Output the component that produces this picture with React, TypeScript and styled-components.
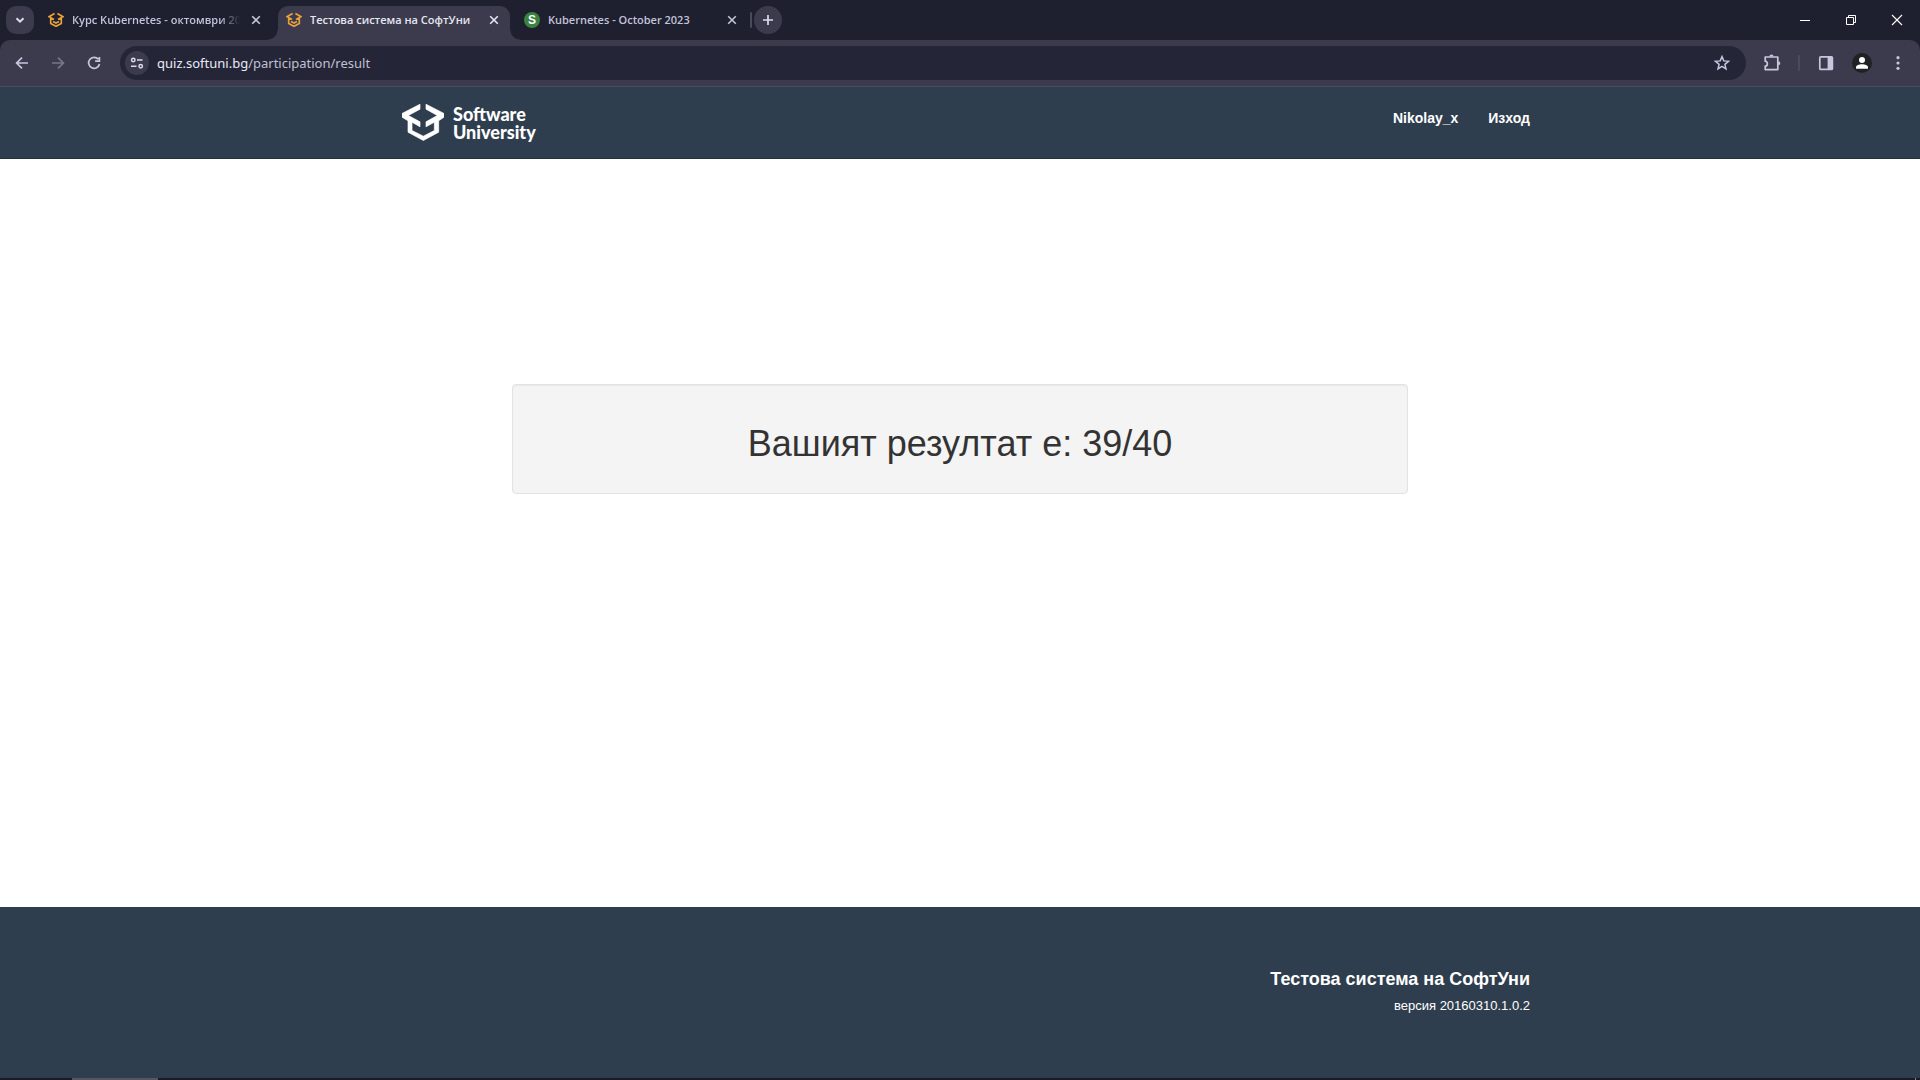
import React from "react";
import styled, { createGlobalStyle } from "styled-components";

const GlobalStyle = createGlobalStyle`
  *, *::before, *::after { box-sizing: border-box; }
  body { margin: 0; background: #fff; font-family: "Liberation Sans", Arial, sans-serif; }
  button, input { font: inherit; }
`;

const uiFont = `"Noto Sans", "Open Sans", sans-serif`;

const Screen = styled.div`
  display: flex;
  flex-direction: column;
  min-height: 100vh;
`;

const TabStrip = styled.header`
  display: flex;
  align-items: flex-start;
  height: 40px;
  padding: 6px 0 0 6px;
  background: #1e1f2f;
  font-family: "Open Sans", "Noto Sans", sans-serif;
`;

const RoundButton = styled.button<{ $radius: number }>`
  display: grid;
  place-items: center;
  flex: none;
  width: 28px;
  height: 28px;
  padding: 0;
  border: 0;
  border-radius: ${(p) => p.$radius}px;
  background: #3b3b4d;
  color: #dcdcec;
`;

const TabList = styled.nav`
  display: flex;
  gap: 6px;
  padding: 0 2px 0 6px;
`;

const Tab = styled.div<{ $active?: boolean }>`
  position: relative;
  display: flex;
  align-items: center;
  gap: 8px;
  width: 232px;
  height: 34px;
  padding: 0 8px 6px;
  border-radius: 10px 10px 0 0;
  background: ${(p) => (p.$active ? "#3b3b4d" : "transparent")};
  color: ${(p) => (p.$active ? "#e6e6f2" : "#c3c3da")};

  &::before,
  &::after {
    content: "";
    display: ${(p) => (p.$active ? "block" : "none")};
    position: absolute;
    bottom: 0;
    width: 10px;
    height: 10px;
  }
  &::before {
    left: -10px;
    background: radial-gradient(circle at 0 0, transparent 9px, #3b3b4d 10px);
  }
  &::after {
    right: -10px;
    background: radial-gradient(circle at 100% 0, transparent 9px, #3b3b4d 10px);
  }
`;

const TabTitle = styled.span<{ $faded?: boolean }>`
  flex: 1;
  min-width: 0;
  overflow: hidden;
  white-space: nowrap;
  font-size: 11px;
  font-weight: 600;
  line-height: 16px;
  mask-image: ${(p) => (p.$faded ? "linear-gradient(to right, #000 88%, transparent)" : "none")};
`;

const CloseButton = styled.button`
  display: grid;
  place-items: center;
  width: 16px;
  height: 16px;
  padding: 0;
  border: 0;
  background: transparent;
  color: inherit;
`;

const Badge = styled.span`
  display: grid;
  place-items: center;
  width: 16px;
  height: 16px;
  border-radius: 50%;
  background: #3b813f;
  color: #fff;
  font-family: "Liberation Sans", Arial, sans-serif;
  font-size: 12px;
  font-weight: 700;
  line-height: 16px;
`;

const Divider = styled.span<{ $gap?: number }>`
  flex: none;
  width: 2px;
  height: 16px;
  margin: 0 ${(p) => p.$gap ?? 0}px;
  border-radius: 1px;
  background: #4a4a5e;
`;

const NewTab = styled.div`
  display: flex;
  align-items: center;
  gap: 2px;
`;

const WindowControls = styled.div`
  display: flex;
  margin: -6px 0 0 auto;
`;

const WindowButton = styled.button`
  display: grid;
  place-items: center;
  width: 46px;
  height: 40px;
  padding: 0;
  border: 0;
  background: transparent;
  color: #fff;
`;

const ToolbarBack = styled.div`
  background: #1e1f2f;
`;

const Toolbar = styled.div`
  display: flex;
  align-items: center;
  height: 47px;
  padding: 0 4px;
  border-bottom: 1px solid #4b4b5d;
  border-radius: 10px 10px 0 0;
  background: #3b3b4d;
  font-family: ${uiFont};
`;

const ToolButton = styled.button<{ $dim?: boolean }>`
  display: grid;
  place-items: center;
  flex: none;
  width: 36px;
  height: 36px;
  padding: 0;
  border: 0;
  background: transparent;
  color: ${(p) => (p.$dim ? "#77778c" : "#c6c6de")};
`;

const AddressBar = styled.div`
  display: flex;
  flex: 1;
  align-items: center;
  height: 34px;
  margin: 0 8px;
  padding: 0 6px 0 5px;
  border-radius: 17px;
  background: #242536;
`;

const SiteInfo = styled.button`
  display: grid;
  place-items: center;
  flex: none;
  width: 24px;
  height: 24px;
  margin-right: 8px;
  padding: 0;
  border: 0;
  border-radius: 50%;
  background: #3b3b4d;
  color: #dcdcec;
`;

const Url = styled.a`
  flex: 1;
  color: #c0c0d2;
  font-size: 13px;
  line-height: 20px;
  text-decoration: none;

  strong {
    color: #eaeaf6;
    font-weight: 400;
  }
`;

const Actions = styled.div`
  display: flex;
  align-items: center;
`;

const SiteHeader = styled.header`
  flex: none;
  height: 72px;
  border-bottom: 1px solid #22303e;
  background: #2f3e4e;
`;

const Container = styled.div`
  display: flex;
  justify-content: space-between;
  width: 100%;
  max-width: 1170px;
  margin: 0 auto;
  padding: 0 15px;
`;

const Brand = styled.a`
  display: flex;
  align-items: center;
  gap: 9px;
  padding: 17px 12px 0;
  color: #fff;
  font-family: Lato, sans-serif;
  font-size: 18px;
  font-weight: 900;
  line-height: 18px;
  text-decoration: none;
`;

const Menu = styled.nav`
  display: flex;
  gap: 30px;
  padding-top: 21px;
`;

const MenuLink = styled.a`
  color: #fff;
  font-size: 14px;
  font-weight: 700;
  line-height: 20px;
  text-decoration: none;
`;

const Main = styled.main`
  flex: 1;
  padding: 225px 24px;
`;

const Well = styled.section`
  max-width: 896px;
  margin: 0 auto;
  padding: 19px;
  border: 1px solid #e3e3e3;
  border-radius: 4px;
  background: #f4f4f4;
  box-shadow: inset 0 1px 1px rgba(0, 0, 0, 0.05);
`;

const Result = styled.h1`
  margin: 20px 0 10px;
  color: #333;
  font-size: 36px;
  font-weight: 400;
  line-height: 40px;
  text-align: center;
`;

const SiteFooter = styled.footer`
  flex: none;
  height: 171px;
  padding-top: 62px;
  background: #2f3e4e;
  color: #fff;
`;

const FooterText = styled.div`
  margin-left: auto;
  text-align: right;
`;

const FooterTitle = styled.h2`
  margin: 0 0 8px;
  font-size: 18px;
  font-weight: 700;
  line-height: 20px;
`;

const Version = styled.p`
  margin: 0;
  font-size: 13px;
  line-height: 18px;
`;

const Taskbar = styled.div`
  display: flex;
  flex: none;
  height: 2px;
  padding: 0 4px 0 72px;
  background: #1d1a28;
`;

const TaskbarItem = styled.span`
  width: 86px;
  background: #55565f;
`;

const TaskbarEdge = styled.span`
  width: 1px;
  margin-left: auto;
  background: #85858c;
`;

const emblem =
  "M54 0 0 28V39L18 50V84L64 109 110 84V50L126 39V28L72 0V15L106 34 72 53V68L97 54V79L64 96 30 79V54L54 68V53L19 34 54 15Z";

const Emblem = () => (
  <svg width="42" height="37" viewBox="0 0 126 110" fill="#fff" stroke="#fff" strokeWidth="2" aria-hidden="true">
    <path d={emblem} />
  </svg>
);

const Favicon = () => (
  <svg width="16" height="16" viewBox="0 0 16 16" fill="none" stroke="#e9a13b" strokeWidth="1.7" aria-hidden="true">
    <path d="M6.6 1.6 1 4.7l5 2.9M9.4 1.6 15 4.7l-5 2.9M2.7 6.2v5.2L8 14.2l5.3-2.8V6.2M5 9.4 8 11l3-1.6" />
  </svg>
);

const Cross = () => (
  <svg width="16" height="16" viewBox="0 0 16 16" stroke="currentColor" strokeWidth="1.6" aria-hidden="true">
    <path d="m4.2 4.2 7.6 7.6M11.8 4.2l-7.6 7.6" />
  </svg>
);

const Icon = ({ children, size = 20 }: { children: React.ReactNode; size?: number }) => (
  <svg width={size} height={size} viewBox={`0 0 ${size} ${size}`} fill="none" stroke="currentColor" strokeWidth="1.7" aria-hidden="true">
    {children}
  </svg>
);

const tabs = [
  { title: "Курс Kubernetes - октомври 2023", faded: true },
  { title: "Тестова система на СофтУни", active: true },
  { title: "Kubernetes - October 2023", badge: "S" },
];

export default function App() {
  return (
    <Screen>
      <GlobalStyle />
      <TabStrip>
        <RoundButton $radius={10} aria-label="Search tabs">
          <Icon size={16}><path d="m4.5 6.2 3.5 3.5 3.5-3.5" strokeWidth="2" /></Icon>
        </RoundButton>
        <TabList>
          {tabs.map((tab) => (
            <Tab key={tab.title} $active={tab.active}>
              {tab.badge ? <Badge>{tab.badge}</Badge> : <Favicon />}
              <TabTitle $faded={tab.faded}>{tab.title}</TabTitle>
              <CloseButton aria-label="Close tab"><Cross /></CloseButton>
            </Tab>
          ))}
        </TabList>
        <NewTab>
          <Divider />
          <RoundButton $radius={14} aria-label="New tab">
            <Icon size={16}><path d="M8 3v10M3 8h10" /></Icon>
          </RoundButton>
        </NewTab>
        <WindowControls>
          <WindowButton aria-label="Minimize">
            <Icon size={12}><path d="M1 6.5h10" strokeWidth="1" /></Icon>
          </WindowButton>
          <WindowButton aria-label="Restore">
            <Icon size={12}><path d="M1.5 3.5h7v7h-7zM3.5 3.5v-2h7v7h-2" strokeWidth="1" /></Icon>
          </WindowButton>
          <WindowButton aria-label="Close">
            <Icon size={12}><path d="m1 1 10 10M11 1 1 11" strokeWidth="1.1" /></Icon>
          </WindowButton>
        </WindowControls>
      </TabStrip>

      <ToolbarBack>
        <Toolbar>
          <Actions>
            <ToolButton aria-label="Back"><Icon><path d="M16 10H4.8M10 4.6 4.6 10l5.4 5.4" /></Icon></ToolButton>
            <ToolButton $dim aria-label="Forward"><Icon><path d="M4 10h11.2M10 4.6l5.4 5.4-5.4 5.4" /></Icon></ToolButton>
            <ToolButton aria-label="Reload">
              <Icon><path d="M14.3 6.2A5.5 5.5 0 1 0 15.5 11M15.4 4v4.2h-4.3" /></Icon>
            </ToolButton>
          </Actions>
          <AddressBar>
            <SiteInfo aria-label="Site information">
              <Icon size={14}>
                <circle cx="3.3" cy="4" r="1.7" strokeWidth="1.5" />
                <path d="M7 4h5.5M1 10.2h5.5" strokeWidth="1.5" />
                <circle cx="10.7" cy="10.2" r="1.7" strokeWidth="1.5" />
              </Icon>
            </SiteInfo>
            <Url href="#"><strong>quiz.softuni.bg</strong>/participation/result</Url>
            <ToolButton aria-label="Bookmark">
              <Icon><path d="m10 3.6 1.8 4.3 4.7.4-3.6 3 1.1 4.6-4-2.5-4 2.5 1.1-4.6-3.6-3 4.7-.4Z" strokeWidth="1.5" /></Icon>
            </ToolButton>
          </AddressBar>
          <Actions>
            <ToolButton aria-label="Extensions">
              <Icon>
                <path d="M3.2 4h12.6v12.6H3.2v-3.4c2.9 0 2.9-5 0-5Z" strokeLinejoin="round" />
                <path d="M7.4 3.6a2.1 2.1 0 0 1 4.2 0ZM16.2 8.2a2.1 2.1 0 0 1 0 4.2Z" fill="currentColor" stroke="none" />
              </Icon>
            </ToolButton>
            <Divider $gap={8} />
            <ToolButton aria-label="Side panel">
              <Icon>
                <rect x="3.8" y="3.8" width="12.6" height="12.6" rx="1" />
                <path d="M11.6 3.8h4.8v12.6h-4.8z" fill="currentColor" stroke="none" />
              </Icon>
            </ToolButton>
            <ToolButton aria-label="Profile">
              <svg width="20" height="20" viewBox="0 0 20 20" aria-hidden="true">
                <circle cx="10" cy="10" r="10" fill="#202124" />
                <circle cx="10" cy="7" r="3" fill="#fff" />
                <path d="M4 15.8v-1.6c0-2 3-3 6-3s6 1 6 3v1.6Z" fill="#fff" />
              </svg>
            </ToolButton>
            <ToolButton aria-label="Menu">
              <Icon>
                <g fill="currentColor" stroke="none">
                  <circle cx="10" cy="4.7" r="1.6" />
                  <circle cx="10" cy="10" r="1.6" />
                  <circle cx="10" cy="15.3" r="1.6" />
                </g>
              </Icon>
            </ToolButton>
          </Actions>
        </Toolbar>
      </ToolbarBack>

      <SiteHeader>
        <Container>
          <Brand href="#">
            <Emblem />
            <span>Software<br />University</span>
          </Brand>
          <Menu>
            <MenuLink href="#">Nikolay_x</MenuLink>
            <MenuLink href="#">Изход</MenuLink>
          </Menu>
        </Container>
      </SiteHeader>

      <Main>
        <Well>
          <Result>Вашият резултат е: 39/40</Result>
        </Well>
      </Main>

      <SiteFooter>
        <Container>
          <FooterText>
            <FooterTitle>Тестова система на СофтУни</FooterTitle>
            <Version>версия 20160310.1.0.2</Version>
          </FooterText>
        </Container>
      </SiteFooter>

      <Taskbar>
        <TaskbarItem />
        <TaskbarEdge />
      </Taskbar>
    </Screen>
  );
}
